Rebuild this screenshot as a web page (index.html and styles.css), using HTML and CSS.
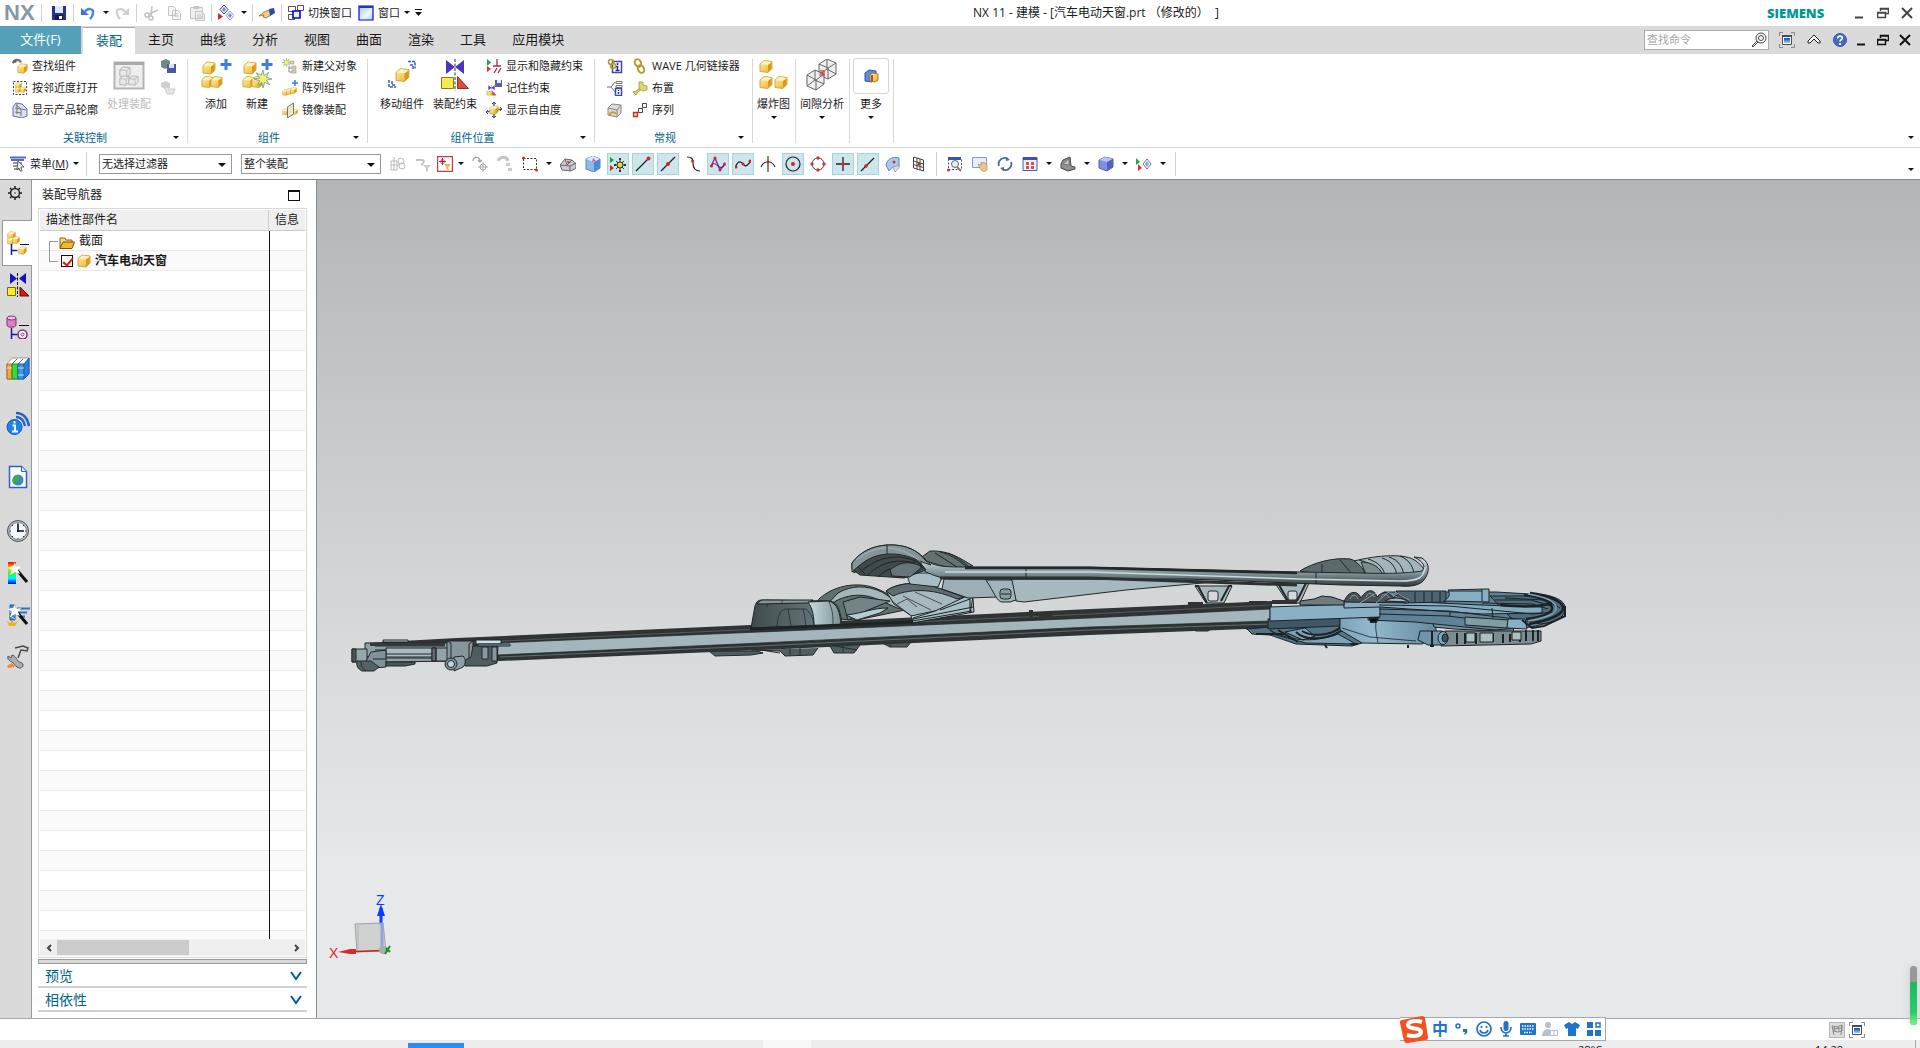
FILE: index.html
```html
<!DOCTYPE html>
<html lang="zh-CN">
<head>
<meta charset="utf-8">
<title>NX 11 - 建模</title>
<link rel="stylesheet" href="styles.css">
</head>
<body>
<svg class="sprite" aria-hidden="true">
  <defs>
    <linearGradient id="gold" x1="0" y1="0" x2="1" y2="1"><stop offset="0" stop-color="#fff0a8"/><stop offset="1" stop-color="#eeb02a"/></linearGradient>
    <linearGradient id="bluefade" x1="0" y1="0" x2="1" y2="1"><stop offset="0" stop-color="#9cc8ea"/><stop offset=".6" stop-color="#eef8ff"/><stop offset="1" stop-color="#a9d4ee"/></linearGradient>
    <linearGradient id="rainbow" x1="0" y1="0" x2="0" y2="1"><stop offset="0" stop-color="#f00"/><stop offset=".3" stop-color="#ffd800"/><stop offset=".5" stop-color="#3f3"/><stop offset=".75" stop-color="#0ef"/><stop offset="1" stop-color="#00f"/></linearGradient>
    <linearGradient id="deepblue" x1="0" y1="0" x2="0" y2="1"><stop offset="0" stop-color="#0b3fb0"/><stop offset="1" stop-color="#9fd2f2"/></linearGradient>
  </defs>
  <symbol id="cube" viewBox="0 0 14 14"><path d="M1 4.500 5 1l8 1v7l-4 4-8-1z" fill="url(#gold)" stroke="#c79a28" stroke-width=".8"/><path d="M1.500 4.500 9 5.500 12.500 2.500 5.500 1.500z" fill="#fff3bd"/><path d="M9 5.500v7l3.500-3.500v-6z" fill="#d89a1c"/></symbol>
  <symbol id="cubegray" viewBox="0 0 14 14"><path d="M1 4.500 5 1l8 1v7l-4 4-8-1z" fill="#e9e9e9" stroke="#a9a9a9"/><path d="M1 4.500 9 5.500l4-3.500M9 5.500V13" fill="none" stroke="#b5b5b5"/></symbol>
  <symbol id="star" viewBox="0 0 16 16"><path d="m8 0 1 5 4-3-2 4.500 5 1.500-5 1 3 4-4.500-2L8 16l-1-5-4 3 2-4.500L0 8l5-1-3-4.500 4.500 2z" fill="#f6ee72" stroke="#5fa08c" stroke-width=".7"/></symbol>
  <symbol id="mate" viewBox="0 0 32 32"><path d="M7 1v14l9-7zM25 1v14l-9-7z" fill="#4a35c4"/><path d="M2.500 18.500h12v11h-12z" fill="#f5ea52" stroke="#8c7a20"/><path d="M18.500 17.500v12h11z" fill="#dc4a3c" stroke="#9c2a22"/><path d="M16 0v32" stroke="#333" stroke-dasharray="3 1.500"/></symbol>
  <symbol id="arc" viewBox="0 0 16 16"><path d="M1 7C3 1 10 1 12 6" fill="none" stroke="#777" stroke-width="3"/><path d="M2 3h4v3H2z" fill="#555"/></symbol>
  <symbol id="restore" viewBox="0 0 12 12"><path d="M3.500 4V1.500h8v5H9M.5 5.500h8v5h-8zM.5 6h8M3.500 2h8" fill="none" stroke="currentColor" stroke-width="1.500"/></symbol>
  <symbol id="close" viewBox="0 0 12 12"><path d="m1 1 10 10M11 1 1 11" stroke="currentColor" stroke-width="2"/></symbol>
  <symbol id="min" viewBox="0 0 12 12"><path d="M2 10.500h8" stroke="currentColor" stroke-width="2"/></symbol>
  <symbol id="screen" viewBox="0 0 16 16"><path d="M.5 4V.5H4M12 .5h3.500V4M15.500 12v3.500H12M4 15.500H.5V12" fill="none" stroke="#888"/><path d="M3.500 3.500h9v9h-9z" fill="#fff" stroke="#4a4e55"/><path d="M3 3h10v2H3z" fill="#4a4e55"/><path d="M5 6h6v5H5z" fill="url(#deepblue)"/></symbol>
  <symbol id="wand" viewBox="0 0 24 24"><path d="m10 8 11 13" stroke="#111" stroke-width="3"/><path d="m9 1 1 5 5-1-3 4 2 4-5-2-5 3 2-5-4-3 5-1z" fill="#fff"/></symbol>
</svg>

<div class="app">
  <header class="titlebar">
    <div class="quick">
      <span class="logo">NX</span>
      <i class="sep"></i>
      <button class="ib save" aria-label="保存"><svg viewBox="0 0 16 16"><path d="M1 1h14v14H1z" fill="#29318f"/><path d="M4 1h8v7H4z" fill="#dce6f5"/><path d="M4 10h8v5H4z" fill="#141a4a"/><path d="M8 11h3v3H8z" fill="#fff"/></svg></button>
      <i class="sep"></i>
      <button class="ib" aria-label="撤消"><svg viewBox="0 0 16 16"><path d="M1 3v7h8z" fill="#3c74cf"/><path d="M5 7C7 3 14 3 13 8c0 2-1 4-3 6" fill="none" stroke="#4b86dc" stroke-width="2.500"/></svg></button>
      <b class="caret"></b>
      <button class="ib" aria-label="重做"><svg viewBox="0 0 16 16"><path d="M15 3v7H8z" fill="#cfcfcf"/><path d="M11 7C9 3 2 3 3 8c0 2 1 4 3 6" fill="none" stroke="#d2d2d2" stroke-width="2.500"/></svg></button>
      <i class="sep"></i>
      <button class="ib" aria-label="剪切"><svg viewBox="0 0 16 16" fill="none" stroke="#c2c2c2" stroke-width="1.500"><circle cx="4" cy="10" r="2"/><circle cx="8" cy="13" r="2"/><path d="m6 9 9-4M8 11l1-10"/></svg></button>
      <button class="ib wide" aria-label="复制"><svg viewBox="0 0 16 16" fill="#f5f5f5" stroke="#c4c4c4"><path d="M2.500 1.500h5l2 2v7h-7zM6.500 5.500h5l3 3v6h-8zM8 9h4M8 11h5"/></svg></button>
      <button class="ib wide" aria-label="粘贴"><svg viewBox="0 0 16 16" fill="#eee" stroke="#c4c4c4"><path d="M1.500 2.500h12v11h-12zM5 1.500h5v2H5zM6.500 6.500h6l3 3v6h-9zM8 10h4M8 12h6"/></svg></button>
      <i class="sep"></i>
      <button class="ib" aria-label="显示"><svg viewBox="0 0 16 16"><path d="m6 0 4 4.500-4 4.500-4-4.500z" fill="#fff" stroke="#333a70"/><path d="m12 6 4 4.500-4 4.500-4-4.500z" fill="#fff" stroke="#8a96cc"/><path d="m6 2 2 2.500L6 7 4 4.500zM12 8l2 2.500-2 2.500-2-2.500z" fill="#7488dc"/><path d="M0 8v7l5-3.500z" fill="#d02a1c"/></svg></button>
      <b class="caret"></b>
      <i class="sep"></i>
      <button class="ib" aria-label="命令"><svg viewBox="0 0 16 16"><path d="m0 11 5-4 5-2 2 5-5 3-3-1 1-2z" fill="#f4c88c" stroke="#7d5a30" stroke-width=".7"/><path d="m10 4 5-1 1 5-5 3z" fill="#3047a8"/></svg></button>
      <i class="sep"></i>
      <button class="ib" aria-label="切换"><svg viewBox="0 0 16 16"><path d="M.5 1.500h7v5h-7zM9.500.5h6v5h-6zM.5 9.500h6v5h-6z" fill="#fff" stroke="#555"/><path d="M5 6h7v7H5z" fill="#e8f2ff" stroke="#00f" stroke-width="1.600"/></svg></button>
      <span class="qtext">切换窗口</span>
      <button class="ib win" aria-label="窗口"><svg viewBox="0 0 16 16"><path d="M1 1h14v14H1z" fill="url(#bluefade)" stroke="#00f" stroke-width="1.200"/><path d="M1 1h14v2H1z" fill="#2430d8"/></svg></button>
      <span class="qtext">窗口</span>
      <b class="caret"></b>
      <svg class="over" viewBox="0 0 7 7"><path d="M0 0h7v1H0zM0 3h7L3.500 7z" fill="#111"/></svg>
    </div>
    <h1 class="title">NX 11 - 建模 - [汽车电动天窗.prt （修改的）  ]</h1>
    <div class="wincontrols">
      <span class="brand">SIEMENS</span>
      <button aria-label="最小化"><svg viewBox="0 0 12 12"><use href="#min"/></svg></button>
      <button aria-label="还原"><svg viewBox="0 0 12 12"><use href="#restore"/></svg></button>
      <button aria-label="关闭"><svg viewBox="0 0 12 12"><use href="#close"/></svg></button>
    </div>
  </header>

  <nav class="tabs">
    <button class="file">文件(F)</button>
    <button class="tab on">装配</button><button class="tab">主页</button><button class="tab">曲线</button><button class="tab">分析</button><button class="tab">视图</button><button class="tab">曲面</button><button class="tab">渲染</button><button class="tab">工具</button><button class="tab">应用模块</button>
    <div class="tabtools">
      <label class="search"><input type="text" placeholder="查找命令" aria-label="查找命令"><svg viewBox="0 0 16 16" fill="none" stroke="#444"><circle cx="10" cy="6" r="5"/><circle cx="10" cy="6" r="2.500"/><path d="m6 9-5 5 1 1 5-5"/></svg></label>
      <button aria-label="全屏"><svg class="s16" viewBox="0 0 16 16"><use href="#screen"/></svg></button>
      <button aria-label="折叠"><svg class="s14" viewBox="0 0 14 14" fill="#fff" stroke="#222"><path d="m1 8 6-6 6 6v2h-2L7 6l-4 4H1z"/></svg></button>
      <button aria-label="帮助"><svg class="s14" viewBox="0 0 14 14"><circle cx="7" cy="7" r="6.500" fill="#4468c4" stroke="#3a57a8"/><path d="M4.700 5.500c0-3.500 4.800-3 4.600-.3C9.200 6.500 7 7 7 8.500M7 10v2" fill="none" stroke="#fff" stroke-width="1.700"/></svg></button>
      <div class="doc">
        <button aria-label="最小化文档"><svg viewBox="0 0 12 12"><use href="#min"/></svg></button>
        <button aria-label="还原文档"><svg viewBox="0 0 12 12"><use href="#restore"/></svg></button>
        <button aria-label="关闭文档"><svg viewBox="0 0 12 12"><use href="#close"/></svg></button>
      </div>
    </div>
  </nav>

  <section class="ribbon">
    <div class="group g-context">
      <div class="items">
        <div class="list">
          <button><svg viewBox="0 0 16 16"><use href="#arc" width="12" height="12"/><use href="#cube" x="5" y="5" width="11" height="11"/></svg>查找组件</button>
          <button><svg viewBox="0 0 16 16"><path d="M1.500 1.500h13v13h-13z" fill="none" stroke="#444" stroke-dasharray="2 1.500"/><use href="#cube" x="3" y="2" width="7" height="7"/><use href="#cube" x="3" y="7" width="6" height="6"/><use href="#cube" x="8" y="7" width="6" height="6"/></svg>按邻近度打开</button>
          <button><svg viewBox="0 0 16 16"><path d="m1 5 3-4 6 1 5 5v7l-5 2-9-2z" fill="#dfe2ea" stroke="#6068b8"/><path d="m3 6 6 1v7M4 3l5 4 5 1M3 10l6 1M5 2v10" fill="none" stroke="#777"/></svg>显示产品轮廓</button>
        </div>
        <button class="big off"><svg viewBox="0 0 32 32"><path d="M1.500 3.500h29v26h-29z" fill="#efefef" stroke="#b4b4b4" stroke-width="2"/><path d="M1 3h30v3H1z" fill="#aaa"/><use href="#cubegray" x="6" y="7" width="12" height="12"/><use href="#cubegray" x="6" y="16" width="11" height="11"/><use href="#cubegray" x="15" y="16" width="11" height="11"/></svg>处理装配</button>
        <div class="list">
          <button aria-label="保存上下文"><svg viewBox="0 0 16 16"><path d="m1 3 5-2 4 2v6l-5 2-4-2z" fill="#6b8a88"/><path d="M7 6h9v9H7z" fill="#4c55a8"/><path d="M9 6h5v4H9z" fill="#dfe6f5"/></svg></button>
          <button aria-label="恢复上下文"><svg viewBox="0 0 16 16"><path d="m1 3 5-2 4 2v5l-5 1-4-2z" fill="#cfcfcf"/><path d="m5 8 2-1 2 2h6l-2 5H7z" fill="#e4e4e4" stroke="#cfcfcf"/></svg></button>
        </div>
      </div>
      <div class="foot"><span>关联控制</span><b class="caret"></b></div>
    </div>

    <div class="group g-comp">
      <div class="items">
        <button class="big"><svg viewBox="0 0 32 32"><use href="#cube" x="2" y="2" width="14" height="14"/><use href="#cube" x="1" y="16" width="13" height="14"/><use href="#cube" x="10" y="16" width="13" height="14"/><path d="M26 0v11M20.500 5.500h11" stroke="#3b7de8" stroke-width="3"/></svg>添加</button>
        <button class="big"><svg viewBox="0 0 32 32"><use href="#cube" x="2" y="2" width="14" height="14"/><use href="#cube" x="1" y="16" width="13" height="14"/><use href="#cube" x="10" y="16" width="13" height="14"/><use href="#star" x="13" y="11" width="18" height="18"/><path d="M26 0v11M20.500 5.500h11" stroke="#3b7de8" stroke-width="3"/></svg>新建</button>
        <div class="list">
          <button><svg viewBox="0 0 16 16"><use href="#star" width="9" height="9"/><path d="M7 8v6h4M7 10h4" fill="none" stroke="#888"/><path d="M8 3h4v3H8zM10 8h4v3h-4zM10 12h4v3h-4z" fill="#dcd49a" stroke="#999" stroke-width=".6"/></svg>新建父对象</button>
          <button><svg viewBox="0 0 16 16"><use href="#cube" y="9" width="7" height="7"/><use href="#cube" x="4" y="8" width="7" height="7"/><use href="#cube" x="8" y="7" width="7" height="7"/><path d="M13 0v6M10 3h6" stroke="#3b7de8" stroke-width="1.500"/></svg>阵列组件</button>
          <button><svg viewBox="0 0 16 16"><use href="#cube" y="6" width="7" height="8"/><use href="#cube" x="10" y="6" width="6" height="8"/><path d="m5.500 5 6-4v11l-6 4z" fill="#f0e6d0" stroke="#777"/></svg>镜像装配</button>
        </div>
      </div>
      <div class="foot"><span>组件</span><b class="caret"></b></div>
    </div>

    <div class="group g-pos">
      <div class="items">
        <button class="big"><svg viewBox="0 0 32 32"><use href="#cube" x="9" y="8" width="15" height="16"/><path d="M22 2.500h7v7M24 6h3v4M3 21v7h7M6 22v4h4" fill="none" stroke="#3d5cae" stroke-width="1.500" stroke-dasharray="3 1"/></svg>移动组件</button>
        <button class="big"><svg viewBox="0 0 32 32"><use href="#mate"/></svg>装配约束</button>
        <div class="list">
          <button><svg viewBox="0 0 16 16"><path d="M1 1v7l4-3.500z" fill="#1ea83c"/><path d="M1 8v6l4-3z" fill="#d33"/><path d="M11 1v7M7 8h8M8 15l3-5M12 15l3-5" stroke="#a02a50" stroke-width="1.300"/></svg>显示和隐藏约束</button>
          <button><svg viewBox="0 0 16 16"><path d="M9 0h7v7H9z" fill="#5a60a0"/><path d="M11 0h4v3h-4z" fill="#e5e9f5"/><use href="#mate" y="5" width="11" height="11"/></svg>记住约束</button>
          <button><svg viewBox="0 0 16 16"><path d="M8 0v16M0 10l16-3" stroke="#3458b0" stroke-width="1.500"/><use href="#cube" x="3" y="3" width="10" height="10"/><path d="m6 2 2-2 2 2M6 14l2 2 2-2M2 8 0 10l2 2M14 5l2 2-2 2" fill="none" stroke="#3458b0"/></svg>显示自由度</button>
        </div>
      </div>
      <div class="foot"><span>组件位置</span><b class="caret"></b></div>
    </div>

    <div class="group g-gen">
      <div class="items">
        <div class="list">
          <button aria-label="链接信息"><svg viewBox="0 0 16 16"><path d="M5.500 3.500h9v11h-9z" fill="#fff" stroke="#3c4ba0" stroke-width="1.500"/><path d="M10.500 5v2M9 8.500h1.500V12M8.500 12.500h4" fill="none" stroke="#222e90" stroke-width="1.600"/><circle cx="4" cy="4" r="2.500" fill="none" stroke="#b39a2a" stroke-width="1.500"/><circle cx="6" cy="8" r="2.500" fill="none" stroke="#b39a2a" stroke-width="1.500"/></svg></button>
          <button aria-label="关系信息"><svg viewBox="0 0 16 16" fill="none" stroke="#777"><path d="M0 7h4M8 2 4 7l4 5M9 1.500h6v2H9zM9 5.500h6v2H9z"/><path d="M8.500 8.500h6v7h-6z" fill="#fff" stroke="#3c4ba0" stroke-width="1.500"/><path d="M11.500 10v1M11.500 12v2" stroke="#222e90" stroke-width="1.500"/></svg></button>
          <button aria-label="包容块"><svg viewBox="0 0 16 16"><path d="m1 6 4-4 9 1v8l-4 4-9-2z" fill="#ddd" stroke="#888"/><path d="m1 6 9 2 4-5M10 8v7" fill="none" stroke="#888"/><path d="M3 13c0-4 5-3 6-1" fill="none" stroke="#d79a2c" stroke-width="2"/></svg></button>
        </div>
        <div class="list">
          <button><svg viewBox="0 0 16 16" fill="none" stroke="#b59a30" stroke-width="2"><ellipse cx="6" cy="5" rx="3" ry="4" transform="rotate(-25 6 5)"/><ellipse cx="9" cy="11" rx="3" ry="4" transform="rotate(-25 9 11)"/></svg>WAVE 几何链接器</button>
          <button><svg viewBox="0 0 16 16"><path d="m1 12 3-1 4-3 2 1-4 3-2 3z" fill="#e2d25a" stroke="#8a8a3a" stroke-width=".7"/><path d="M7 2h4v3l4 1v4l-4 1-4-2z" fill="#dfd468" stroke="#999244" stroke-width=".7"/></svg>布置</button>
          <button><svg viewBox="0 0 16 16" fill="#fff" stroke="#444"><path d="M10.500 1.500h4v4h-4zM6.500 6.500h4v4h-4z"/><path d="M1.500 10.500h4v4h-4z" fill="#ffe9a0" stroke="#e02020" stroke-width="1.300"/></svg>序列</button>
        </div>
      </div>
      <div class="foot"><span>常规</span><b class="caret"></b></div>
    </div>

    <div class="group g-single s43"><div class="items">
      <button class="big"><svg viewBox="0 0 32 32"><use href="#cube" x="1" y="0" width="14" height="15"/><use href="#cube" x="1" y="16" width="14" height="15"/><use href="#cube" x="16" y="16" width="14" height="15"/></svg>爆炸图<b class="caret"></b></button>
    </div></div>
    <div class="group g-single s54"><div class="items">
      <button class="big"><svg viewBox="0 0 32 32" fill="#e8e8e8" fill-opacity=".7" stroke="#666"><path d="m13 5 8-5 9 4v11l-8 5-9-4z"/><path d="m13 5 9 4 8-5M22 9v11M21 0v10l9 5M21 10l-8 6" fill="none"/><path d="m1 16 8-5 9 4v10l-8 6-9-4z"/><path d="m1 16 9 5 8-6M10 21v10M9 11v10l9 4M9 21l-8 6" fill="none"/><path d="M14 11h5v6h-5z" fill="#d33" fill-opacity=".6" stroke="none"/></svg>间隙分析<b class="caret"></b></button>
    </div></div>
    <div class="group g-single s44"><div class="items">
      <button class="big more"><span class="frame"><svg viewBox="0 0 16 16"><path d="m2 5 4-3 7 1v7l-4 4-7-1z" fill="#5b8ce0" stroke="#2d55a8"/><path d="m7 7 2-2 6 1v6l-3 2-5-1z" fill="url(#gold)" stroke="#a87a18"/><path d="M9 7v6" stroke="#b8501c" stroke-width="2"/></svg></span>更多<b class="caret"></b></button>
    </div></div>
    <b class="caret end"></b>
  </section>

  <section class="selbar">
    <button class="menu"><svg viewBox="0 0 16 16"><path d="M0 1.500h16M1 4h13" stroke="#5a6ab8" stroke-width="2"/><path d="M3 7h9M3 10h7M4 13h8" stroke="#777" stroke-width="1.500"/><path d="m8 5 6 6h-3l1 4-2 0-1-3-2 2z" fill="#eee" stroke="#444" stroke-width=".8"/></svg>菜单(<u>M</u>)<b class="caret"></b></button>
    <i class="sep"></i>
    <div class="combo type"><select aria-label="类型过滤器"><option>无选择过滤器</option></select></div>
    <div class="combo scope"><select aria-label="选择范围"><option>整个装配</option></select></div>
    <div class="tools">
      <button aria-label="交互"><svg viewBox="0 0 16 16" fill="none" stroke="#bbb"><path d="M1 5h6v9H1zM4 1v13M1 9h9"/><circle cx="11" cy="5" r="3"/><circle cx="12" cy="10" r="3"/></svg></button>
      <button aria-label="后退过滤"><svg viewBox="0 0 16 16"><path d="M1 4h6c3 0 2 4-1 5" fill="none" stroke="#c2c2c2" stroke-width="2"/><path d="M8 9h8l-3 3v4l-2-1v-3z" fill="#ccc"/></svg></button>
      <button class="boxed" aria-label="过滤器"><svg viewBox="0 0 16 16"><path d="M.5.5h15v15H.5z" fill="#fff" stroke="#d03848" stroke-width="1.400"/><path d="M5.500 2v7M2 5.500h7" stroke="#b02040"/><circle cx="5.500" cy="5.500" r="2" fill="none" stroke="#555" stroke-width=".7"/><path d="M7 8h7l-2.500 3v3l-2-1v-2z" fill="#eab548"/></svg></button>
      <b class="caret"></b>
      <button aria-label="选择组"><svg viewBox="0 0 16 16" fill="none" stroke="#aaa"><path d="M1 5c0-5 7-5 7 1M6 4l2 2 2-2" stroke-width="1.500"/><circle cx="11" cy="11" r="3"/><path d="M11 6v10M6 11h10"/></svg></button>
      <button aria-label="层级"><svg viewBox="0 0 16 16"><path d="M1 5c2-5 9-5 10 0" fill="none" stroke="#c4c4c4" stroke-width="3"/><path d="M9 7h4v3H9zM11 12h4v3h-4z" fill="#ccc"/></svg></button>
      <button aria-label="矩形"><svg viewBox="0 0 16 16"><path d="M1.500 2.500h13v11h-13z" fill="none" stroke="#333" stroke-dasharray="2 1.500"/><circle cx="1.500" cy="2" r="1.500" fill="#d22"/><circle cx="14.500" cy="14" r="1.500" fill="#d22"/></svg></button>
      <b class="caret"></b>
      <button aria-label="面规则"><svg viewBox="0 0 16 16"><path d="m0 9 5-6 7 1 4 4v4l-5 3-9-1z" fill="#c9ccd2" stroke="#666"/><path d="m0 9 10 1 6-3M10 10v5M5 3l2 6M12 4l-5 5" fill="none" stroke="#666"/><path d="m7 5 4 1-3 2z" fill="#b33"/></svg></button>
      <button aria-label="体"><svg viewBox="0 0 16 16"><path d="m1 3 7-3 7 3v9l-6 4-8-3z" fill="#8cb8ee" stroke="#5a80c8"/><path d="m1 3 8 3 6-3-7-3z" fill="#dbe9fb"/><path d="M9 6v10l6-4V3z" fill="#4f8ad8"/><path d="m8 2 3 3-4 1z" fill="#e46070"/></svg></button>
      <button class="on" aria-label="捕捉点"><svg viewBox="0 0 16 16"><path d="M0 1v6l4-3z" fill="#1c9c30"/><path d="M0 9v6l4-3z" fill="#d22"/><path d="M10 3v12M4 9h12M6 5l8 8M14 5l-8 8" stroke="#333"/><circle cx="10" cy="9" r="3" fill="#f2d23c" stroke="#333"/><path d="M9 2h2v2H9zM9 14h2v2H9zM4 8h2v2H4zM14 8h2v2h-2z" fill="#333"/></svg></button>
      <button class="on" aria-label="端点"><svg viewBox="0 0 16 16"><path d="M1 15 13 3" stroke="#222" stroke-width="1.300"/><circle cx="13.500" cy="2.500" r="2" fill="#d22"/></svg></button>
      <button class="on" aria-label="中点"><svg viewBox="0 0 16 16"><path d="M1 15 15 1" stroke="#222" stroke-width="1.300"/><circle cx="8" cy="8" r="2" fill="#d22"/></svg></button>
      <button aria-label="控制点"><svg viewBox="0 0 16 16"><path d="M2 1c5 0 6 2 6 6s1 8 7 8" fill="none" stroke="#222" stroke-width="1.200"/><circle cx="7.500" cy="5" r="1.500" fill="#d22"/></svg></button>
      <button class="on" aria-label="极点"><svg viewBox="0 0 16 16"><path d="m1 10 4-8 5 12 5-6" fill="none" stroke="#8a2ad0" stroke-width="1.500"/><path d="M1 10c5-8 8 8 14-2" fill="none" stroke="#222"/><g fill="#d22"><circle cx="1.500" cy="10" r="1.500"/><circle cx="5" cy="2" r="1.500"/><circle cx="10" cy="14" r="1.500"/><circle cx="14.500" cy="8" r="1.500"/></g></svg></button>
      <button class="on" aria-label="样条点"><svg viewBox="0 0 16 16"><path d="M0 12C4 1 8 8 9 9c2 2 4 0 7-4" fill="none" stroke="#222" stroke-width="1.300"/><g fill="#d22"><circle cx="1" cy="11" r="1.500"/><circle cx="8" cy="8" r="1.500"/><circle cx="15" cy="5" r="1.500"/></g></svg></button>
      <button aria-label="交点"><svg viewBox="0 0 16 16"><path d="M8 0v16M1 11C4 4 12 4 15 11" fill="none" stroke="#333" stroke-width="1.200"/><circle cx="8" cy="6" r="1.500" fill="#d22"/></svg></button>
      <button class="on" aria-label="圆心"><svg viewBox="0 0 16 16"><circle cx="8" cy="8" r="7" fill="none" stroke="#222" stroke-width="1.200"/><circle cx="8" cy="8" r="2" fill="#d22"/></svg></button>
      <button aria-label="象限点"><svg viewBox="0 0 16 16"><circle cx="8" cy="8" r="6" fill="none" stroke="#444"/><g fill="#d33"><circle cx="8" cy="2" r="1.700"/><circle cx="8" cy="14" r="1.700"/><circle cx="2" cy="8" r="1.700"/><circle cx="14" cy="8" r="1.700"/></g></svg></button>
      <button class="on" aria-label="现有点"><svg viewBox="0 0 16 16"><path d="M8 1v14M1 8h14" stroke="#222" stroke-width="1.300"/><circle cx="8" cy="8" r="1.800" fill="#d22"/></svg></button>
      <button class="on" aria-label="曲线上的点"><svg viewBox="0 0 16 16"><path d="M1 15 14 2" stroke="#222" stroke-width="1.300"/><circle cx="6" cy="10" r="1.800" fill="#d22"/></svg></button>
      <button aria-label="面上的点"><svg viewBox="0 0 16 16"><path d="M1 9C2 3 8 0 14 2v9c-5-1-8 1-10 4z" fill="#a9c9f2" stroke="#5a84c8"/><path d="m8 11 6-2v3l-4 4z" fill="#ddd" stroke="#888" stroke-width=".6"/><circle cx="9" cy="6" r="1.500" fill="#c33"/></svg></button>
      <button aria-label="有界栅格"><svg viewBox="0 0 16 16" fill="none" stroke="#444"><path d="m3.500 1 10 3v11l-10-3zM7 2v11M10 3v11M3.500 5l10 3M3.500 8.500l10 3"/><circle cx="9" cy="8" r="1.500" fill="#d22" stroke="none"/></svg></button>
      <i class="sep"></i>
      <button aria-label="缩放"><svg viewBox="0 0 16 16"><path d="M1.500 2.500h13v11h-13z" fill="#fff" stroke="#44c" stroke-dasharray="2 1.500"/><path d="M1 1h13v3H1z" fill="#3c50b8"/><circle cx="8" cy="8" r="3.500" fill="#e6eef5" stroke="#666"/><path d="m10 11 4 4" stroke="#9a8030" stroke-width="2"/><circle cx="1.500" cy="14" r="1.500" fill="#d22"/></svg></button>
      <button aria-label="平移"><svg viewBox="0 0 16 16"><path d="M.5 1.500h14v10H.5z" fill="#e8eefb" stroke="#8a98c0"/><path d="m6 8 3 1V6l2 1 1-1 1 1 2 2v5l-3 2-3-2z" fill="#ecc48c" stroke="#a88450" stroke-width=".6"/></svg></button>
      <button aria-label="旋转"><svg viewBox="0 0 16 16" fill="none" stroke="#52689c" stroke-width="1.800"><path d="M2 10A6 6 0 0 1 11 3M14 6A6 6 0 0 1 5 13"/><path d="m9 1 4 3-4 1zM7 15l-4-3 4-1z" fill="#52689c" stroke="none"/></svg></button>
      <button aria-label="适合窗口"><svg viewBox="0 0 16 16"><path d="M1 1.500h14v13H1z" fill="#eef2ff" stroke="#4a58b8"/><path d="M1 1h14v3H1z" fill="#3f4fb8"/><path d="M4 6h3v3H4zM9 6h3v3H9zM4 10h3v3H4zM9 10h3v3H9z" fill="#dd5038"/></svg></button>
      <b class="caret"></b>
      <button aria-label="截面"><svg viewBox="0 0 16 16"><path d="m1 8 2-4 7-3 1 9 4 1v2l-7 2-7-3z" fill="#8e9092" stroke="#444"/><path d="m3 8 6-5v6z" fill="#c4c6c8" stroke="#555" stroke-width=".6"/></svg></button>
      <b class="caret"></b>
      <button aria-label="着色"><svg viewBox="0 0 16 16"><path d="m1 4 6-3 8 2v8l-6 4-8-3z" fill="#8390dd" stroke="#525fae"/><path d="m1 4 8 2 6-3-8-2z" fill="#b9c2f2"/><path d="M9 6v9l6-4V3z" fill="#5563bd"/></svg></button>
      <b class="caret"></b>
      <button aria-label="显示隐藏"><svg viewBox="0 0 16 16"><path d="M0 2v7l4-3z" fill="#1ea83c"/><path d="M2 8v7l4-3z" fill="#d33"/><path d="m11 3 4 5-4 5-4-5z" fill="#fff" stroke="#68759c"/><path d="m11 5 2 3-2 3-2-3z" fill="#93a2dd"/></svg></button>
      <b class="caret"></b>
      <i class="sep"></i>
    </div>
    <b class="caret end"></b>
  </section>

  <main class="work">
    <nav class="rail">
      <button class="gear" aria-label="选项"><svg viewBox="0 0 16 16" fill="none" stroke="#222"><circle cx="8" cy="8" r="4.500" stroke-width="1.500"/><path d="M8 1v2M8 13v2M1 8h2M13 8h2M3 3l1.500 1.500M11.500 11.500 13 13M3 13l1.500-1.500M11.500 4.500 13 3M7.500 8h1" stroke-width="1.500"/></svg></button>
      <button class="on" aria-label="装配导航器"><svg viewBox="0 0 24 24"><use href="#cube" x="1" y="0" width="9" height="9"/><use href="#cube" x="1" y="6" width="8" height="8"/><use href="#cube" x="6" y="5" width="8" height="8"/><path d="M14 13.500h9" stroke="#111"/><path d="M5.500 13v12M5.500 19.500h6" stroke="#1a1a9a" stroke-width="1.500"/><use href="#cube" x="12" y="15" width="9" height="9"/></svg></button>
      <button aria-label="约束导航器"><svg viewBox="0 0 24 24"><path d="M4 0v11l7-5.500zM20 0v11l-7-5.500z" fill="#1a12c0"/><path d="M1.500 14.500h8v8h-8z" fill="#ffee20" stroke="#776a10"/><path d="M14 14v9h9z" fill="#d81818" stroke="#6a0a0a"/><path d="M11.500 0v24" stroke="#111" stroke-dasharray="3 1.500"/></svg></button>
      <button aria-label="部件导航器"><svg viewBox="0 0 24 24"><path d="M1 3v7c0 3 9 3 9 0V3z" fill="#d880c0" stroke="#8a2a78"/><ellipse cx="5.500" cy="3" rx="4.500" ry="2" fill="#f3c4e6" stroke="#8a2a78"/><path d="M13 10.500h10" stroke="#111"/><path d="M5.500 13v12M5.500 19.500h6" stroke="#1a1a9a" stroke-width="1.500"/><circle cx="16.500" cy="19.500" r="4.500" fill="#fff" stroke="#8a2a78" stroke-width="1.500"/><circle cx="16.500" cy="19.500" r="1.500" fill="none" stroke="#8a2a78"/></svg></button>
      <button aria-label="重用库"><svg viewBox="0 0 24 24"><path d="m1 7 5-6h17v15l-5 6H1z" fill="#fff" stroke="#777" stroke-width=".7"/><path d="M1 7h5v15H1z" fill="#f2a545" stroke="#b06a18"/><path d="M6 7h6v15H6z" fill="#38d838" stroke="#189018"/><path d="M12 7h6v15h-6z" fill="#3a98ec" stroke="#1a5aac"/><path d="m18 7 5-6v16l-5 5z" fill="#2a80d8" stroke="#1a5aac"/><path d="M1 11h5M12 11h6M12 18h6" stroke="#fff" stroke-width=".7"/><path d="m6 7 5-5M12 7l5-5" stroke="#2a8a3a"/></svg></button>
      <button class="spaced" aria-label="HD3D 工具"><svg viewBox="0 0 24 24"><path d="M10 2c7 0 12 5 13 13M10 6c5 0 8 4 9 9" fill="none" stroke="#2a62c0" stroke-width="2.500"/><circle cx="8.500" cy="16" r="7.500" fill="#1c84e8" stroke="#1458b0"/><path d="M8.500 10v2.500M6.500 14.500h2.500V20M6 20.500h6" fill="none" stroke="#fff" stroke-width="2"/></svg></button>
      <button class="spaced" aria-label="Web 浏览器"><svg viewBox="0 0 24 24"><path d="M3.500 1.500h12l5 5v16h-17z" fill="#fff" stroke="#2a62c0" stroke-width="1.500"/><path d="M15.500 1.500v5h5" fill="#d9e6fa" stroke="#2a62c0"/><circle cx="12" cy="15" r="5.500" fill="#3c88c8"/><path d="M8 12c3-4 6-1 5 2s-5 2-3 6c-4-1-5-5-2-8zM15 16l2 1-2 3z" fill="#38b048"/></svg></button>
      <button class="spaced" aria-label="历史记录"><svg viewBox="0 0 24 24"><circle cx="12" cy="12" r="10.500" fill="#b4bac4" stroke="#555"/><circle cx="12" cy="12" r="8.500" fill="#f3f8ff" stroke="#666" stroke-width=".7"/><path d="M12 5v8M11 12h7" stroke="#111" stroke-width="1.600"/><path d="M12 4v1M12 19v1M4 12h1M19 12h1M6 6l1 1M18 6l-1 1M6 18l1-1M18 18l-1-1" stroke="#333"/></svg></button>
      <button aria-label="系统材料"><svg viewBox="0 0 24 24"><path d="M2 1h8v22H2z" fill="url(#rainbow)"/><use href="#wand"/></svg></button>
      <button aria-label="Process Studio"><svg viewBox="0 0 24 24"><path d="M4 2h5v15H4z" fill="#3f8ad0" stroke="#1a5a9c"/><path d="m4 5 5 3M4 9l5 3M4 13l5 3" stroke="#bcdcf5"/><path d="M11 5.500h13M12 9.500h9M13 13.500h6" stroke="#3a70c0" stroke-width="2"/><path d="m1 18 3 2 2-3 2 3 4-2-3 5H3z" fill="#f0b020"/><use href="#wand"/></svg></button>
      <button aria-label="角色"><svg viewBox="0 0 24 24"><path d="m9 3 8-2 5 2-1 3-6-1-3 8" fill="none" stroke="#4a4a4a" stroke-width="1.500"/><path d="m2 11 3 2 1-3c4 1 4 4 6 6s5 1 5 4-3 4-6 2-3-4-5-5-5-2-4-6z" fill="#a9adb5" stroke="#555"/><path d="m1 21 5-3 3 4-7 1z" fill="#f28c28"/></svg></button>
    </nav>

    <aside class="panel">
      <header><h2>装配导航器</h2><button aria-label="最大化"></button></header>
      <div class="treebox">
        <div class="treebody">
          <table>
            <thead><tr><th>描述性部件名</th><th class="info">信息</th></tr></thead>
            <tbody>
              <tr><td><div class="node folder"><svg viewBox="0 0 16 14"><path d="M1 12V2h5l1 2h6v3" fill="#f7d774" stroke="#8a6414"/><path d="m1 12 3-6h11.500L13 12.500H1z" fill="#f3b92e" stroke="#7a5510"/></svg>截面</div></td><td></td></tr>
              <tr><td><div class="node part"><input type="checkbox" id="part" checked><svg viewBox="0 0 14 14"><use href="#cube"/></svg><label for="part">汽车电动天窗</label></div></td><td></td></tr>
            </tbody>
          </table>
        </div>
        <div class="hscroll">
          <button aria-label="向左"><svg viewBox="0 0 8 8"><path d="M6 1 3 4l3 3" fill="none" stroke="#444" stroke-width="2"/></svg></button>
          <i></i>
          <button aria-label="向右"><svg viewBox="0 0 8 8"><path d="m2 1 3 3-3 3" fill="none" stroke="#444" stroke-width="2"/></svg></button>
        </div>
      </div>
      <div class="splitter"></div>
      <button class="fold">预览<svg viewBox="0 0 12 10"><path d="m1 1 5 7 5-7" fill="none" stroke="#00648a" stroke-width="2"/></svg></button>
      <button class="fold">相依性<svg viewBox="0 0 12 10"><path d="m1 1 5 7 5-7" fill="none" stroke="#00648a" stroke-width="2"/></svg></button>
    </aside>

    <div class="canvas">
      <svg viewBox="317 180 1603 838" preserveAspectRatio="xMinYMin meet" role="img" aria-label="汽车电动天窗模型">
        <defs>
          <linearGradient id="tube" x1="0" y1="0" x2="0" y2="1"><stop offset="0" stop-color="#3a4345"/><stop offset=".15" stop-color="#6f7f83"/><stop offset=".4" stop-color="#c3d3d7"/><stop offset=".7" stop-color="#7d9094"/><stop offset="1" stop-color="#2f3739"/></linearGradient>
          <linearGradient id="shade" x1="0" y1="0" x2="1" y2="0"><stop offset="0" stop-color="#3f4a4c"/><stop offset="1" stop-color="#76878b"/></linearGradient>
          <linearGradient id="pale" x1="0" y1="0" x2="1" y2="0"><stop offset="0" stop-color="#c6dde3"/><stop offset="1" stop-color="#7d9195"/></linearGradient>
          <linearGradient id="motor" x1="0" y1="0" x2="1" y2="0"><stop offset="0" stop-color="#7da3b8"/><stop offset=".35" stop-color="#94b9cd"/><stop offset="1" stop-color="#648a9e"/></linearGradient>
        </defs>
        <!-- underside brackets -->
        <g fill="#4f5e61" stroke="#26292a">
          <path d="M709 651h48l6 2-12 2-36 1zM751 650l29 1 5 5 28-1 5-7M830 646l4 7h20l6-8M882 643l8 4h17l5-6"/>
          <path d="M1188 627l8 4h12l8-5z"/>
          <path d="M755 649l25 4M790 648v7M800 648v7M835 646l22 4M843 645v7M890 643v4" fill="none"/>
        </g>
        <!-- main guide beam -->
        <path d="M365 643 457 638 751 625 1090 609 1272 601V628L1090 635 760 650 500 661 386 655z" fill="#303334"/>
        <path d="M497 643 760 632 1090 618 1270 609V621L1090 627 760 643 497 655z" fill="#a3b6bc" stroke="#222" stroke-width=".7"/>
        <path d="M500 657 760 646 1090 630 1270 624" fill="none" stroke="#5f6e71"/>
        <path d="M460 643 760 629 1090 614 1270 605" fill="none" stroke="#596567" stroke-width=".8"/>
        <!-- front end fittings -->
        <g stroke="#222829">
          <path d="M365 643h92v18l-70 1-22-6z" fill="#8fa2a7"/>
          <path d="M386 648h50v10h-50z" fill="#a9bcc2"/>
          <path d="M384 654h62M375 646h70M386 657h50" fill="none"/>
          <path d="M370 643h75v3h-75z" fill="#333839" stroke="none"/>
          <path d="M383 640h25v2h-25z" fill="#b9ccd1"/>
          <path d="M352 649h15v13h-15z" fill="#93a7ac"/>
          <path d="M352 649h4v13h-4z" fill="#4a5557"/>
          <path d="M371 652l15-2v17l-13 1-7-7z" fill="#7f9297"/>
          <path d="M357 661h14l8 6-5 4h-12c-4-2-6-5-5-10z" fill="#536265"/>
          <path d="M361 662c0 5 2 7 5 9M373 659h13M375 650h11" fill="none"/>
          <path d="M386 662h29v2l-10 2h-19z" fill="#47575a"/>
          <path d="M432 648h17v13h-17z" fill="#90a4a9"/><path d="M436 648v13M432 648h4v13h-4z" fill="#5d6b6e"/>
          <path d="M447 641h26v22h-26z" fill="#86979b"/>
          <path d="M447 641l4 2v20M473 641l-4 3v18" fill="none"/>
          <path d="M473 646h25l-1 17-10 3h-22l-3-4 9-5z" fill="#4e5d60"/>
          <path d="M482 647h6v12h-6zM492 647h5v14h-5z" fill="#87999e"/>
          <path d="M476 640h25v4h-25z" fill="#c9e3e6"/><path d="M478 644h32v2h-32z" fill="#87999e"/>
          <path d="M454 657l9-1c3 3 3 8 0 11l-9 4z" fill="#8ea0a5"/>
          <circle cx="451" cy="664" r="6" fill="#7d9095"/><circle cx="451" cy="664" r="3.500" fill="#bdd6d9"/>
        </g>
        <!-- left cover cap and rear shells -->
        <g stroke="#1e2425">
          <path d="M813 606c12-18 40-26 62-18 16 6 24 14 30 22l-48 10-20-1z" fill="#60706f"/>
          <path d="M838 593c14-8 28-8 44-1l26 17-11-1-20-9c-20-8-38-3-56 12z" fill="#a4b6ba"/>
          <path d="M843 602l17-5 30 4-24 10-18 9z" fill="#738386"/>
          <path d="M886 591c12-9 36-10 52-3l26 9-8 9-40 13-22-15z" fill="#a6b9bf"/>
          <path d="M886 591c12-9 36-10 52-3l26 9-7 2c-20-9-44-12-64-3z" fill="#5f6d70"/>
          <path d="M892 601l18 14M903 596l28 14M915 592l27 12M897 604l10-5 10 8" fill="none" stroke-width=".7"/>
          <path d="M846 615c18-2 26-7 42-7l-8 5-23 7z" fill="#b4cbd0"/>
          <path d="M911 616l61-13 1 7-60 13z" fill="#c0d7dc"/>
          <path d="M935 611l34-16 4 4 1 13-62 11 1-5z" fill="#a9c0c5"/>
          <path d="M913 619l60-12M912 621l60-10M940 610l30-11M970 596v17M973 597l-3 16" fill="none"/>
          <path d="M751 628l4-22c1-4 3-6 7-6l68 1c8 1 11 12 12 24z" fill="url(#shade)"/>
          <path d="M757 604c3-4 5-4 9-4h47l-5 3z" fill="#849599"/>
          <path d="M808 602l20-1c10 2 12 12 13 24l-27 2c0-10-1-18-6-25z" fill="url(#pale)"/>
          <path d="M777 628c0-12 4-19 9-19h20c6 6 8 11 8 18M788 609l3 17M803 609c2 7 2 11 3 17M767 604v3M782 600v3M829 602c4 8 4 16 4 24" fill="none" stroke-width=".7"/>
          <path d="M750 629 913 622" stroke-width="3"/>
        </g>
        <!-- glass support plates -->
        <g stroke="#232829">
          <path d="M906 573h38l-6 14-28-3z" fill="#a9bec4"/>
          <path d="M944 579h46l8 18-30 1-26-9z" fill="#9dafb5"/>
          <path d="M1010 579h236l-120 11-102 12-8-1z" fill="#a6b9bf"/>
          <path d="M986 580h26l4 20-6 2h-8c-5 0-8-10-16-22z" fill="#a2b5ba"/>
          <rect x="1000" y="589" width="11" height="10" rx="3" fill="#8b9c9f"/><path d="M1001 594h9"/>
          <path d="M1195 586h37l-8 17h-18zM1275 583h34l-9 20h-12z" fill="#a7babf"/>
          <path d="M1195 586h3l9 17M1232 586h-3l-8 15M1275 583h3l10 18M1309 583h-3l-9 18" fill="none" stroke-width="2"/>
          <rect x="1208" y="591" width="10" height="10" rx="2" fill="#d5d7d9"/><rect x="1288" y="591" width="9" height="9" rx="2" fill="#d5d7d9"/>
        </g>
        <path d="M1029 610h4v7h-4zM1038 614h15l-2 4h-12zM1188 602h15v4h-15zM1249 601h18v3h-18zM1272 600h25v4h-25z" fill="#303334"/>
        <!-- glass panel frame -->
        <g stroke="#202627">
          <path d="M930 551c18-1 30 7 43 15l-20 3-34-10z" fill="#64736f"/>
          <path d="M940 552c10 2 18 8 26 14M948 553c8 3 14 8 20 13M935 553l22 14" fill="none"/>
          <path d="M1300 571c12-8 34-14 50-12 10 3 14 8 16 15l-30 3z" fill="#5d6a6c"/>
          <path d="M1354 561c24-6 52-8 62 0 8 6 10 10 6 16l-56-1c-2-6-6-12-12-15z" fill="#a3b5b9"/>
          <path d="M1359 560c12 3 20 9 20 16M1368 559c10 3 16 9 17 17M1382 558c10 3 14 10 15 18M1389 557c10 3 14 11 15 19M1400 556c10 4 14 12 14 20" fill="none"/>
          <path d="M1361 562c10 0 20 5 22 14l-16 1z" fill="#7c8d8f"/>
          <path d="M1322 564v10M1340 560l12 14" fill="none"/>
          <path d="M852 563c8-11 20-17 35-18 20-1 31 6 40 16 9 6 20 6 40 6h123l210 5 60 1c30 1 50 0 62-2 4-4 2-9-8-14l8 1c8 5 8 14 2 22-4 5-12 7-24 6l-58-1-152-6H955c-14 0-22-4-29-7-14-10-24-14-36-13-14 1-24 6-36 14z" fill="url(#tube)"/>
          <path d="M852 563c7-2 15-8 26-10 16-3 29-1 41 8l7 9-22 8-44-3-8-6z" fill="#3f4a4c"/>
          <path d="M860 572c16-14 36-20 58-10l6 7M868 575c14-14 30-16 48-12M878 577c8-9 22-13 42-8M857 566l8 8" fill="none" stroke="#222"/>
          <path d="M890 570c10-9 22-9 32-3l-12 10-18-1z" fill="#66757a"/>
          <path d="M852 563c8-11 20-17 35-18 20-1 31 6 38 15l6 5c-14-4-24-12-43-11-16 1-24 7-36 18z" fill="#84969a"/>
          <path d="M856 560c20-17 46-16 67 4" fill="none" stroke="#a5b7ba"/>
          <path d="M887 545v9M921 561v7M1026 567v12M1316 573v11" fill="none"/>
        </g>
        <path d="M965 568h125l207 5" fill="none" stroke="#23282a" stroke-width="2.500"/>
        <path d="M945 572h145l210 7 100 2c20 0 24-4 25-14" fill="none" stroke="#c9dade" stroke-width="1.500"/>
        <path d="M940 578h150l207 7" fill="none" stroke="#2b3031" stroke-width="3"/>
        <!-- motor end: bodies, track loop and teeth -->
        <g stroke="#1b2226">
          <path d="M1246 629l26-2 26 1 34-9 30 24-10 3-56-2-26-9-18-1-6-6z" fill="#557486"/>
          <path d="M1270 630c16 10 42 14 68 4l18 10-50-1-30-8zM1285 632l20-4 10 8-12 4z" fill="#7fa2b6"/>
          <path d="M1296 632c10 10 36 8 50-5M1302 631c10 6 30 5 40-5M1278 630l20 12M1256 634h30" fill="none" stroke-width="2"/>
          <path d="M1268 619l72-3v10l-72 3z" fill="#405766"/>
          <path d="M1340 617h60l36 1v18l-14 8-60-1-22-13z" fill="url(#motor)"/>
          <path d="M1377 616c-3 10 0 20 1 27M1342 628l28 9 46 4" fill="none" stroke-width=".8"/>
          <path d="M1430 616h80l4 16-60-3-20-2z" fill="#6f93a7"/>
          <path d="M1445 631h96v10l-10 3-90 2z" fill="#7b8d90"/>
          <path d="M1457 633v11M1465 633v11M1476 633v11M1493 633v9M1503 634v9M1510 634v8M1520 632v10M1526 630v11M1533 630v11M1538 630v11" stroke-width="2"/>
          <path d="M1466 633h9v9h-9zM1480 633h13v9h-13zM1512 632h9v8h-9z" fill="#adc0c2"/>
          <path d="M1420 631h22c4 2 4 11 0 14h-14l-10-5z" fill="#6d96ac"/>
          <ellipse cx="1443" cy="638" rx="5" ry="6.500" fill="#7fa8bd"/><ellipse cx="1445" cy="638" rx="3" ry="4" fill="#385260"/>
          <path d="M1432 631v14" fill="none" stroke-width="2"/>
          <path d="M1384 592h112l50 3c14 3 20 8 19 14-1 8-14 14-34 18l-36 3-80-8-47-2v-16z" fill="#5f8296"/>
          <path d="M1490 596h50c16 3 25 8 25 14-2 10-12 12-24 14l-30-6z" fill="#4e6e80"/>
          <path d="M1270 607l110-4v14l-110 4z" fill="#8ab0c5"/>
          <path d="M1344 601l36-1 100 5 62 2v6l-60 1-102-7-36 1z" fill="#86acc1"/>
          <path d="M1379 605l70 1 84 8 22-2M1379 609l70 2 75 9M1379 614l68 2 80 9M1482 603l50 1 16 5M1495 600h36l20 6M1505 598l40 2 15 8M1450 612v5M1492 608l1 10" fill="none"/>
          <path d="M1500 605c30 3 50 1 52-4M1530 593c20 2 33 9 33 15s-12 12-34 16M1524 595c18 2 28 7 28 13s-10 9-26 11" fill="none" stroke-width="2.500"/>
          <path d="M1528 594c18 3 28 8 28 14s-8 9-28 13" fill="none" stroke="#7ea3b7" stroke-width="1.500"/>
          <path d="M1465 617l44 3-2 8-42-3z" fill="#809da0"/><path d="M1508 619h17l2 10-20-1z" fill="#88b0c5"/>
          <path d="M1396 591h50v11l-42 1z" fill="#4c6574"/><path d="M1424 592v10M1432 592v10M1440 592v10M1415 592v10" fill="none"/>
          <path d="M1448 590l38-1h3v13l-45-1c6-4 6-7 4-11z" fill="#86aec4"/><path d="M1482 589v12M1448 591h34" fill="none"/>
          <path d="M1344 602c4-12 14-12 17-4 6-10 14-9 16-1 6-7 13-5 16 1 5-6 12-3 15 5z" fill="#465257"/>
          <path d="M1350 599c2-5 6-5 8 0M1366 597c2-5 6-5 8 0M1381 597c2-4 6-4 8 1M1386 591l22 12M1395 592l14 8M1360 603l16-10M1376 603l14-12" fill="none" stroke="#8799a0"/>
          <path d="M1385 601c8-5 18-3 24 1z" fill="#a4b6ba"/>
          <path d="M1300 601l14-2 8-3 10 1 12 4v4h-44z" fill="#6d7c7f"/>
          <path d="M1325 645l2 3M1408 645v3M1350 644h8M1430 646h4M1370 618h8l-2 4h-5z" stroke-width="2"/>
          <path d="M1522 620l10 8 12-2 21-10v-10" fill="none" stroke-width="2"/>
        </g>
        <!-- view triad -->
        <path d="M381 908v17" stroke="#0a3cff" stroke-width="3"/><path d="m377 916 4-12 4 12z" fill="#0a3cff"/>
        <path d="m355 924 28-1 3 28-29 1z" fill="#cbcbcb" fill-opacity=".8" stroke="#a2a2a2"/><path d="M358 925v26" stroke="#b5b5b5"/>
        <path d="M382 923v27" stroke="#96a2dc" stroke-width="3"/>
        <path d="M382 950.500 345 952" stroke="#c82020" stroke-width="1.500"/><path d="m338 952 12-3h6v5h-6z" fill="#d62a2a"/>
        <circle cx="383" cy="950" r="4" fill="#a5b0a8"/><path d="m386 948 4 4M390 946l-5 8" stroke="#1c8c28" stroke-width="2"/>
        <text x="376" y="905" class="axis z">Z</text><text x="329" y="958" class="axis x">X</text>
      </svg>
    </div>
  </main>

  <footer class="status">
    <svg viewBox="0 0 16 16"><path d="M.5.5h15v15H.5z" fill="#ddd" stroke="#b5b5b5"/><path d="m3 4 2 9M3 4l5 1 5-2v6l-4 1-5-1M5 4l1 5M9 4l1 5M3 7l9-1M13 3l-1 10" fill="none" stroke="#888"/></svg>
    <svg viewBox="0 0 16 16"><use href="#screen"/></svg>
  </footer>
  <div class="taskbar"><i class="active"></i><i class="light"></i><span class="temp">28°C</span><span class="clock">14:28</span><i class="peek"></i></div>

  <div class="ime">
    <svg class="sogou" viewBox="0 0 28 28"><path d="m2 5 20-4c2 0 3 1 3 2l3 19c0 2 0 2-2 3L8 28c-2 0-3 0-4-2L0 8c0-2 0-3 2-3z" fill="#f4511e"/><path d="M22 7c-6-2-14-1-14 3 0 5 13 2 13 7 0 4-8 5-14 3" fill="none" stroke="#fff" stroke-width="4"/></svg>
    <span class="zh">中</span>
    <svg viewBox="0 0 16 16"><circle cx="4" cy="5" r="2" fill="none" stroke="#1f73c8" stroke-width="1.500"/><path d="M9 8h4c1 3 0 5-3 6l1-3H9z" fill="#1f73c8"/></svg>
    <svg viewBox="0 0 16 16" fill="none" stroke="#1f73c8" stroke-width="1.700"><circle cx="8" cy="8" r="7"/><path d="M5.500 5v2M10.500 5v2M4 9c1 4 7 4 8 0"/></svg>
    <svg viewBox="0 0 16 16"><rect x="5.500" y="0" width="5" height="10" rx="2.500" fill="#1f73c8"/><path d="M3 6c0 8 10 8 10 0M8 12v3M5 15h6" fill="none" stroke="#1f73c8" stroke-width="1.700"/></svg>
    <svg viewBox="0 0 16 16"><rect y="2" width="16" height="12" rx="1" fill="#1f73c8"/><path d="M2 5h12M2 8h12M4 11.500h8" stroke="#fff" stroke-width="1.600" stroke-dasharray="1.500 1"/></svg>
    <svg viewBox="0 0 16 16"><circle cx="6" cy="4" r="3" fill="#b4c0d6"/><path d="M0 15c0-9 12-9 12 0z" fill="#b4c0d6"/><path d="M8.500 9.500h7v5h-7zM12 9v6" fill="#fff" stroke="#b4c0d6"/></svg>
    <svg viewBox="0 0 16 16"><path d="m5 1 3 2 3-2 5 3-2 4-2-1v8H4V7L2 8 0 4z" fill="#1f73c8"/></svg>
    <svg viewBox="0 0 16 16"><path d="M1 1h6v6H1zM1 9h6v6H1zM9 9h6v6H9z" fill="#1f73c8"/><path d="M10 2h4v4h-4z" fill="none" stroke="#1f73c8" stroke-width="1.500"/></svg>
  </div>
  <div class="meter"><i></i></div>
</div>
</body>
</html>
```
FILE: styles.css
```css
* { box-sizing: border-box; }
body, h1, h2 { margin: 0; }
body { font: 11px/16px "Open Sans", "Noto Sans CJK SC", sans-serif; color: #1a1a1a; background: #fff; }
h1, h2 { font-weight: 400; }
button, input, select { font: inherit; color: inherit; border: 0; background: none; padding: 0; margin: 0; }
button { display: flex; align-items: center; justify-content: center; white-space: nowrap; }
svg { display: block; flex: none; }
.sprite { position: absolute; width: 0; height: 0; }
.app { position: relative; display: flex; flex-direction: column; height: 100vh; min-height: 760px; overflow: hidden; }

.caret { flex: none; width: 0; height: 0; border: 3px solid transparent; border-top-color: #111; border-bottom: 0; }
.sep { flex: none; width: 1px; height: 18px; background: #d0d0d0; }

/* Title bar */
.titlebar { display: flex; align-items: center; height: 26px; flex: none; padding-bottom: 1px; }
.quick { display: flex; align-items: center; padding-left: 4px; width: 425px; flex: none; }
.logo { width: 37px; font: 700 22px/24px "Liberation Sans", sans-serif; color: #8499a8; }
.quick .sep { margin: 0 6px; }
.quick .logo + .sep { margin: 0 9px 0 0; }
.quick .caret + .sep { margin-left: 0; }
.ib svg { width: 16px; height: 16px; }
.wide { margin-left: 7px; }
.ib + .caret { margin: 0 5px 0 7px; }
.qtext { margin-left: 4px; white-space: nowrap; }
.qtext + .ib { margin-left: 6px; }
.qtext + .caret { margin: 0 5px 0 4px; }
.over { width: 7px; height: 7px; }
.title { flex: 1; text-align: center; font-size: 12px; white-space: pre; }
.wincontrols { display: flex; align-items: center; gap: 12px; padding-right: 7px; color: #444; }
.wincontrols svg, .doc svg { width: 12px; height: 12px; }
.brand { width: 60px; margin-right: 14px; font: 800 13px/16px "Open Sans", sans-serif; color: #099; }

/* Ribbon tabs */
.tabs { display: flex; height: 28px; flex: none; background: #dadada; font-size: 13px; }
.file { width: 81px; margin-right: 2px; background: #53a0b8; color: #fff; }
.tab, .file { padding: 0 13px 2px; }
.tab.on { background: #fff; color: #00648a; border-top: 1px solid #aaa; margin-top: 1px; }
.tabtools { display: flex; align-items: center; gap: 12px; margin-left: auto; padding-right: 9px; }
.search { display: flex; align-items: center; width: 125px; height: 20px; margin-right: -2px; border: 1px solid #aaa; background: #fff; font-size: 11px; }
.search input { width: 100px; flex: 1; padding-left: 2px; outline: 0; }
.search input::placeholder { color: #a5a5a5; opacity: 1; }
.search svg { width: 16px; height: 16px; margin-right: 1px; }
.s16 { width: 16px; height: 16px; }
.s14 { width: 14px; height: 14px; }
.doc { display: flex; gap: 10px; margin-left: -4px; color: #111; }

/* Ribbon */
.ribbon { display: flex; height: 94px; flex: none; border-bottom: 1px solid #d8d8d8; }
.group { display: flex; flex-direction: column; justify-content: space-between; flex: none; background: linear-gradient(#d8d8d8, #d8d8d8) right 0 top 5px / 1px 84px no-repeat; }
.g-context { width: 188px; }
.g-comp { width: 180px; }
.g-pos { width: 227px; }
.g-gen { width: 158px; }
.s43 { width: 43px; }
.s54 { width: 54px; }
.s44 { width: 44px; }
.items { display: flex; gap: 9px; padding: 1px 0 0 12px; }
.g-single .items { justify-content: center; padding: 1px 2px 0 0; }
.list button { height: 22px; gap: 4px; justify-content: flex-start; }
.list svg { width: 16px; height: 16px; }
.big { flex-direction: column; justify-content: flex-start; min-width: 32px; padding-top: 4px; align-self: flex-start; }
.big svg { width: 32px; height: 32px; margin-bottom: 5px; }
.big .caret { margin-top: 4px; }
.big.off { color: #bcbcbc; }
.frame { display: flex; align-items: center; justify-content: center; width: 36px; height: 36px; margin: -1px 0 2px; border: 1px solid #d5d5d5; border-radius: 3px; }
.frame svg { width: 16px; height: 16px; margin: 0; }
.foot { display: flex; align-items: center; height: 19px; padding-right: 9px; color: #00648a; }
.foot span { flex: 1; text-align: center; padding-right: 3px; }
.end { margin: auto 6px 8px auto; }

/* Selection bar */
.selbar { display: flex; align-items: center; height: 32px; flex: none; border-bottom: 1px solid #858a8a; }
.menu { width: 72px; margin-left: 10px; justify-content: flex-start; }
.menu svg { width: 16px; height: 16px; margin-right: 4px; }
.menu .caret { margin-left: 5px; }
.selbar > .sep, .tools .sep { height: 24px; margin: 0 4px; }
.combo { position: relative; height: 20px; margin-left: 9px; border: 1px solid #999; }
.combo::after { content: ""; position: absolute; right: 5px; top: 8px; border: 4px solid transparent; border-top-color: #111; border-bottom: 0; pointer-events: none; }
.combo select { width: 100%; height: 18px; padding: 0 2px; appearance: none; outline: 0; }
.type { width: 133px; margin-left: 8px; }
.scope { width: 140px; }
.tools { display: flex; align-items: center; gap: 3px; margin-left: 6px; }
.tools button { width: 22px; height: 22px; }
.tools button.boxed { width: 16px; }
.tools svg { width: 16px; height: 16px; }
.tools .on { background: #cce6ec; border: 1px solid #a9d4dd; }
.tools .caret { margin: 0 2px; }

/* Work area */
.work { display: flex; flex: 1; min-height: 0; border-bottom: 1px solid #a5a8aa; }
.rail { width: 32px; flex: none; background: #dadada; border-right: 1px solid #999; }
.rail button { width: 31px; height: 42px; padding-left: 5px; }
.rail svg { width: 24px; height: 24px; }
.rail .gear { height: 26px; margin-bottom: 16px; padding: 0; }
.rail .gear svg { width: 16px; height: 16px; margin-right: 1px; }
.rail .on { width: 30px; height: 46px; margin: -2px 0 -2px 2px; padding-left: 1px; background: #fff; border: 1px solid #999; border-right: 0; box-shadow: 1px 0 #fff; }
.rail .spaced { margin-top: 12px; }
.panel { display: flex; flex-direction: column; width: 285px; flex: none; padding: 0 9px 6px 6px; border-right: 1px solid #858f96; }
.panel header { display: flex; align-items: center; justify-content: space-between; height: 28px; padding: 2px 7px 0 4px; }
.panel h2 { font-size: 12px; }
.panel header button { width: 12px; height: 11px; border: 1px solid #111; border-top-width: 2px; }
.treebox { display: flex; flex-direction: column; flex: 1; min-height: 0; border: 1px solid #d8d8d8; padding: 1px; }
.treebody { flex: 1; min-height: 0; overflow: hidden; background: linear-gradient(#111, #111) 229px 0 / 1px 100% no-repeat, linear-gradient(#fff 19px, #eaeaea 19px 20px, #fafafa 20px 39px, #eaeaea 39px) 0 21px / 100% 40px; }
.treebody table { width: 100%; border-spacing: 0; table-layout: fixed; font-size: 12px; }
.treebody th { height: 21px; padding: 0 6px; background: #efefef; border-bottom: 1px solid #ccc; font-weight: 400; text-align: left; white-space: nowrap; }
.treebody .info { width: 37px; border-left: 1px solid #ccc; }
.treebody td { height: 20px; padding: 0; }
.node { display: flex; align-items: center; gap: 4px; height: 20px; padding-left: 19px; }
.folder { background: linear-gradient(#999, #999) 9px 10px / 9px 1px no-repeat, linear-gradient(#999, #999) 9px 10px / 1px 10px no-repeat; }
.folder svg { width: 16px; height: 14px; margin-top: 3px; }
.part { padding-left: 21px; font-weight: 700; background: linear-gradient(#999, #999) 9px 10px / 9px 1px no-repeat, linear-gradient(#999, #999) 9px 0 / 1px 10px no-repeat; }
.part svg { width: 14px; height: 14px; }
.part input { appearance: none; width: 12px; height: 12px; border: 1px solid #111; position: relative; }
.part input:checked::after { content: ""; position: absolute; left: 3px; top: 0; width: 4px; height: 8px; border: solid #e01818; border-width: 0 2px 2px 0; transform: rotate(40deg); }
.hscroll { display: flex; height: 17px; background: #efefef; }
.hscroll button { width: 17px; }
.hscroll svg { width: 8px; height: 8px; }
.hscroll i { width: 132px; margin: 1px auto 1px 0; background: #cbcbcb; }
.splitter { height: 5px; margin-top: 1px; border: 1px solid #999; background: #d8d8d8; }
.fold { justify-content: space-between; height: 24px; width: 100%; padding: 2px 5px 0 7px; border-bottom: 2px solid #d0d0d0; font-size: 14px; color: #00648a; }
.fold svg { width: 12px; height: 10px; }
.canvas { flex: 1; min-width: 0; background: linear-gradient(#b4b5b6, #d5d6d8 50%, #e6e8e9 82%); }
.canvas svg { width: 100%; height: 100%; }
.axis { font: 14px "Liberation Sans", sans-serif; }
.z { fill: #0a3cff; }
.x { fill: #d62a2a; }

/* Status bar and desktop edge */
.status { display: flex; align-items: center; justify-content: flex-end; gap: 4px; height: 21px; flex: none; padding-right: 55px; }
.status svg { width: 16px; height: 16px; }
.taskbar { display: flex; align-items: flex-start; height: 8px; flex: none; overflow: hidden; background: #ededed; line-height: 14px; color: #111; }
.taskbar .active { width: 56px; height: 5px; margin: 3px 0 0 408px; background: #2a8cff; }
.taskbar .light { width: 48px; height: 8px; margin-left: 299px; background: #f8f8f8; }
.taskbar span { padding-top: 3px; }
.temp { margin-left: auto; width: 237px; }
.clock { width: 100px; }
.peek { width: 1px; height: 8px; background: #aaa; margin-right: 4px; }
.ime { position: absolute; right: 314px; bottom: 7px; display: flex; align-items: center; gap: 6px; height: 24px; padding-right: 3px; background: #fff; border: 1px solid #a3a8b0; border-left: 0; }
.ime svg { width: 16px; height: 16px; }
.ime .sogou { width: 28px; height: 28px; margin-right: -2px; }
.zh { width: 16px; font-size: 16px; font-weight: 700; color: #1f73c8; }
.meter { position: absolute; right: 3px; bottom: 23px; width: 7px; height: 59px; border-radius: 4px; overflow: hidden; background: #999; box-shadow: 0 0 8px #ccc; }
.meter i { display: block; height: 43px; margin-top: 16px; background: linear-gradient(#1fb862, #28cc6c 70%, #80f088); }
```
